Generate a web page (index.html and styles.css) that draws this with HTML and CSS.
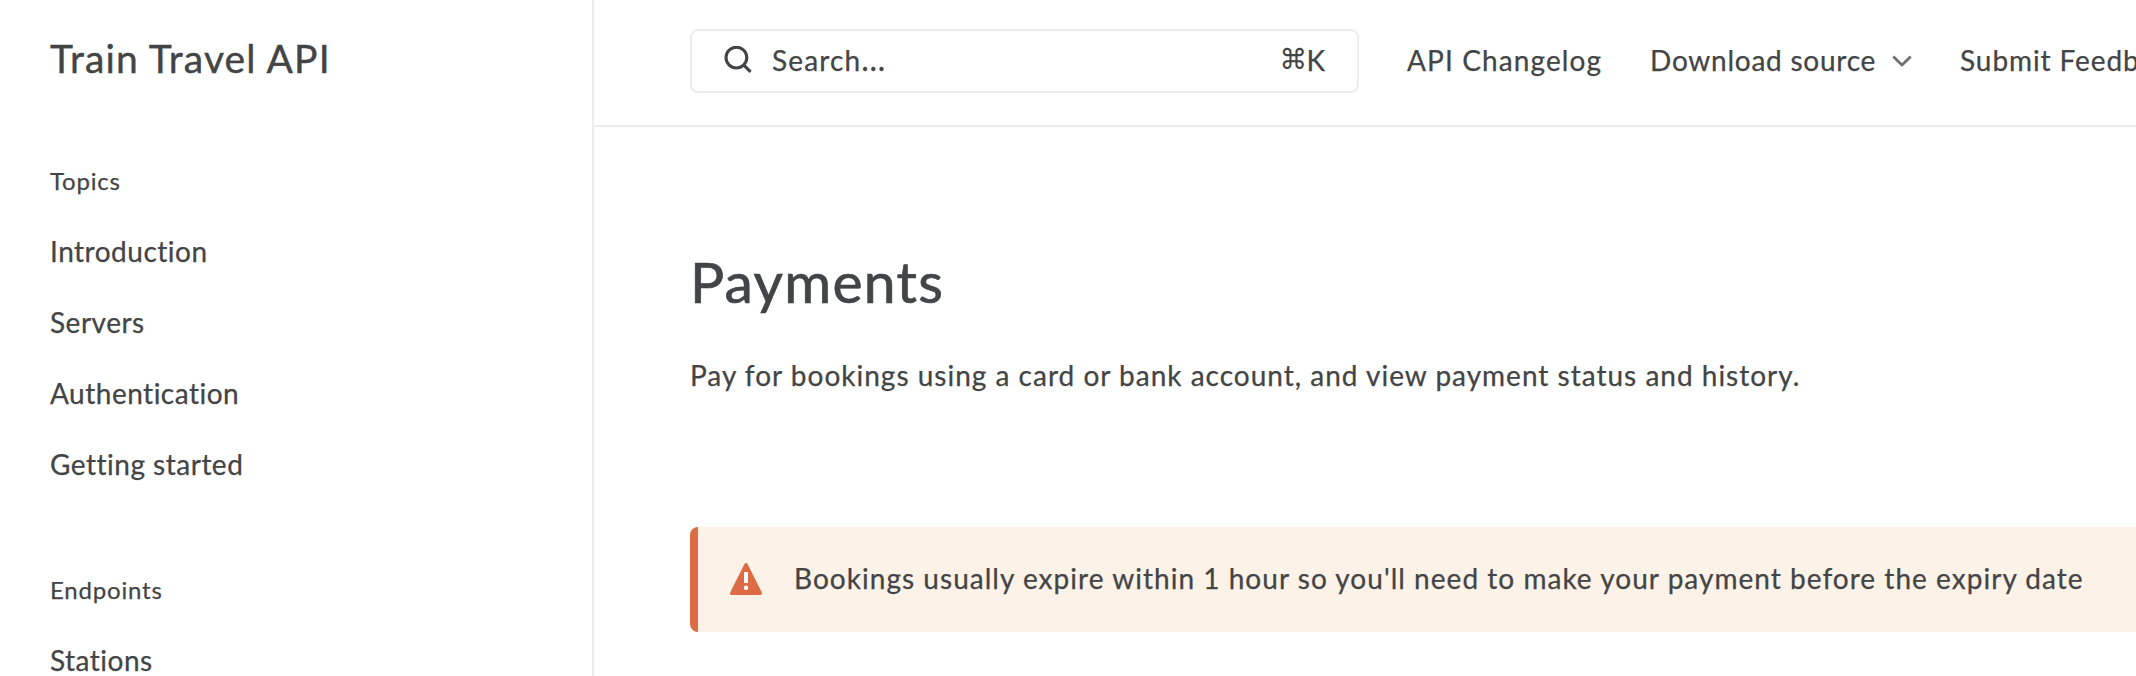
FILE: index.html
```html
<!DOCTYPE html>
<html lang="en">
<head>
<meta charset="utf-8">
<title>Train Travel API</title>
<link rel="stylesheet" href="styles.css">
</head>
<body>
<div class="page">
  <aside class="sidebar">
    <div class="brand">Train Travel API</div>
    <nav class="group">
      <h2 class="group-title">Topics</h2>
      <a class="link">Introduction</a>
      <a class="link">Servers</a>
      <a class="link">Authentication</a>
      <a class="link">Getting started</a>
    </nav>
    <nav class="group">
      <h2 class="group-title">Endpoints</h2>
      <a class="link">Stations</a>
    </nav>
  </aside>
  <main class="main">
    <header class="topbar">
      <div class="search">
        <svg class="search-icon" viewBox="0 0 28 28"><circle cx="12.4" cy="11.6" r="10.4"/><path d="M19.6 18.9L26.6 25.9"/></svg>
        <span class="search-label">Search<span class="dots">…</span></span>
        <span class="shortcut"><span class="cmd">⌘</span><span class="key">K</span></span>
      </div>
      <a class="nav-link changelog">API Changelog</a>
      <a class="nav-link download">Download source
        <svg class="chevron" viewBox="0 0 20 12"><path d="M1.3 1.5L10 10L18.7 1.5"/></svg></a>
      <a class="nav-link feedback">Submit Feedback</a>
    </header>
    <section class="content">
      <h1 class="title">Payments</h1>
      <p class="lead">Pay for bookings using a card or bank account, and view payment status and history.</p>
      <div class="alert">
        <svg class="alert-icon" viewBox="0 0 32 32"><path class="tri" d="M14.3 1.2Q16-1.2 17.7 1.2L31.6 29Q32.6 32 30 32H2Q-.6 32 .4 29Z"/><rect class="mark" x="14" y="9" width="4" height="11"/><circle class="mark" cx="16" cy="24.8" r="2.2"/></svg>
        <span class="alert-text">Bookings usually expire within 1 hour so you'll need to make your payment before the expiry date</span>
      </div>
    </section>
  </main>
</div>
</body>
</html>
```
FILE: styles.css
```css
* { box-sizing: border-box; }
body { margin: 0; background: #fff; color: #434445; font-family: Lato, "Liberation Sans", sans-serif; font-size: 28px; line-height: 40px; overflow: hidden; -webkit-text-stroke: .25px #434445; }
.page { display: flex; height: 676px; overflow: hidden; }
.sidebar { flex: none; width: 594px; border-right: 2px solid #ececec; padding: 34px 50px 0; white-space: nowrap; }
.brand { font-size: 39px; line-height: 48px; height: 82px; letter-spacing: 1.15px; -webkit-text-stroke-width: .4px; }
.group { height: 409px; }
.group-title { margin: 0; height: 115px; padding-top: 49px; font-size: 24px; line-height: 32px; font-weight: 400; letter-spacing: .8px; }
.link { display: block; height: 71px; line-height: 40px; letter-spacing: .5px; }
.main { flex: 1; min-width: 0; }
.topbar { height: 127px; border-bottom: 2px solid #ececec; padding: 29px 0 0 96px; display: flex; white-space: nowrap; overflow: hidden; }
.search { flex: none; width: 669px; height: 64px; border: 2px solid #ececec; border-radius: 8px; display: flex; align-items: center; padding: 0 32px 2px; }
.search-icon { width: 28px; height: 28px; fill: none; stroke: #434445; stroke-width: 3.1; }
.search-label { margin-left: 20px; flex: 1; letter-spacing: 1.15px; }
.dots { font-size: 32px; line-height: 1; }
.shortcut { display: flex; align-items: center; }
.cmd { font-family: "DejaVu Sans", sans-serif; font-size: 28px; margin-right: -1px; -webkit-text-stroke-width: 0; }
.nav-link { flex: none; height: 64px; padding-bottom: 2px; display: flex; align-items: center; margin-left: 48px; letter-spacing: .8px; }
.changelog { letter-spacing: 1.1px; }
.download { letter-spacing: .75px; }
.feedback { letter-spacing: .9px; }
.chevron { width: 20px; height: 12px; margin: 2px 0 0 16px; fill: none; stroke: #707172; stroke-width: 2.8; }
.content { padding: 118px 0 0 96px; white-space: nowrap; }
.title { margin: 0; font-size: 57px; line-height: 72px; font-weight: 400; letter-spacing: 1.3px; -webkit-text-stroke-width: .7px; }
.lead { margin: 38px 0 0; height: 172px; letter-spacing: 1px; }
.alert { height: 105px; background: #fcf2e7; border-left: 8px solid #dd6c45; border-radius: 8px 0 0 8px; display: flex; align-items: center; padding: 0 0 1px 32px; }
.alert-icon { width: 32px; height: 32px; margin-right: 32px; }
.alert-text { letter-spacing: 1.03px; padding-bottom: 3px; }
.tri { fill: #dd6c45; }
.mark { fill: #fff; }
```
